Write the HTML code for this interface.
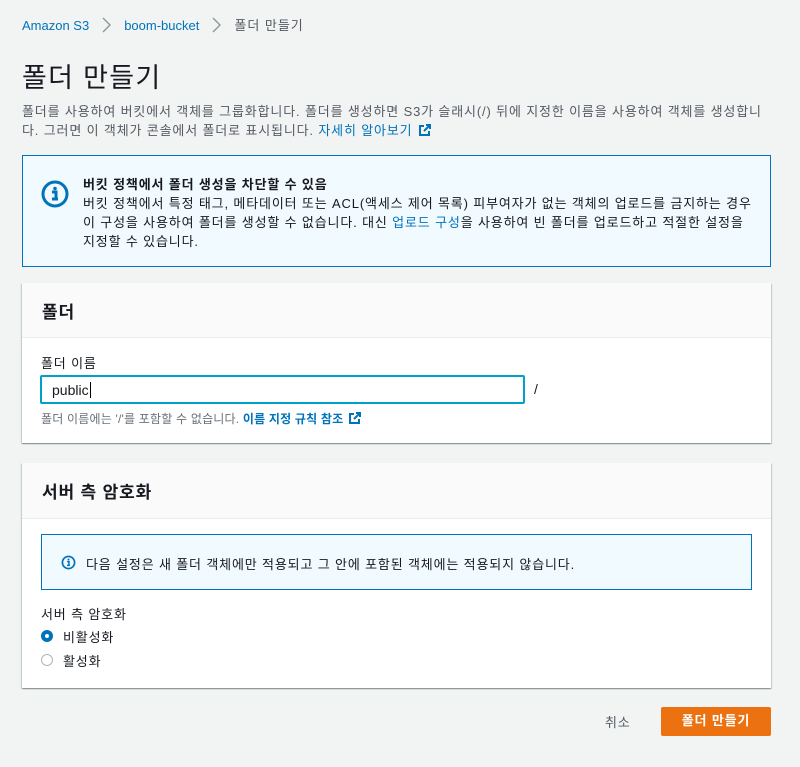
<!DOCTYPE html>
<html><head><meta charset="utf-8"><style>
*{box-sizing:border-box;margin:0;padding:0}
body{width:800px;height:767px;background:#f2f3f3;font-family:"Liberation Sans","Noto Sans CJK KR",sans-serif;color:#16191f;font-size:13px;position:relative;overflow:hidden;letter-spacing:0.85px}
.a{position:absolute}
a{color:#0073bb;text-decoration:none}
.card{position:absolute;left:22px;width:749px;background:#fff;box-shadow:0 1px 1px 0 rgba(0,28,36,.3),1px 1px 1px 0 rgba(0,28,36,.15),-1px 1px 1px 0 rgba(0,28,36,.15)}
.hd{background:#fafafa;border-bottom:1px solid #eaeded;padding:0 20px;font-weight:bold;font-size:17px;display:flex;align-items:center}
.ext{display:inline-block;vertical-align:-2px;margin-left:5px}
.chev{display:inline-block;vertical-align:-3px;margin:0 13px}
</style></head><body>
<div class="a" style="left:22px;top:15px;font-size:13px;color:#545b64;letter-spacing:0">
<a href="#">Amazon S3</a><svg class="chev" width="9" height="16" viewBox="0 0 9 16"><path d="M1 1l7 7-7 7" fill="none" stroke="#879596" stroke-width="1.3"/></svg><a href="#">boom-bucket</a><svg class="chev" width="9" height="16" viewBox="0 0 9 16"><path d="M1 1l7 7-7 7" fill="none" stroke="#879596" stroke-width="1.3"/></svg><span style="letter-spacing:1px">폴더 만들기</span></div>
<div class="a" style="left:22px;top:56px;font-size:27px;letter-spacing:1.3px">폴더 만들기</div>
<div class="a" style="left:22px;top:102px;width:752px;line-height:19px;color:#545b64">폴더를 사용하여 버킷에서 객체를 그룹화합니다. 폴더를 생성하면 S3가 슬래시(/) 뒤에 지정한 이름을 사용하여 객체를 생성합니다. 그러면 이 객체가 콘솔에서 폴더로 표시됩니다. <a href="#">자세히 알아보기<svg class="ext" width="13" height="13" viewBox="0 0 13 13"><path d="M6 2H2v9h9V7M8 1h4v4M12 1L6 7" fill="none" stroke="#0073bb" stroke-width="2"/></svg></a></div>
<div class="a" style="left:22px;top:155px;width:749px;height:112px;border:1px solid #0073bb;background:#f1faff">
<svg class="a" style="left:18px;top:24px" width="28" height="28" viewBox="0 0 28 28"><circle cx="14" cy="14" r="12" fill="none" stroke="#0073bb" stroke-width="3"/><circle cx="14" cy="8.5" r="1.8" fill="#0073bb"/><path d="M11 12h4v7h2M11 19h6" stroke="#0073bb" stroke-width="3" fill="none"/></svg>
<div class="a" style="left:60px;top:19px;width:670px;line-height:19px"><b>버킷 정책에서 폴더 생성을 차단할 수 있음</b><br>버킷 정책에서 특정 태그, 메타데이터 또는 ACL(액세스 제어 목록) 피부여자가 없는 객체의 업로드를 금지하는 경우 이 구성을 사용하여 폴더를 생성할 수 없습니다. 대신 <a href="#">업로드 구성</a>을 사용하여 빈 폴더를 업로드하고 적절한 설정을 지정할 수 있습니다.</div></div>
<div class="card" style="top:283px;height:160px">
<div class="hd" style="height:55px">폴더</div>
<div class="a" style="left:19px;top:70px">폴더 이름</div>
<div class="a" style="left:18px;top:92px;width:485px;height:29px;border:2px solid #00a1c9;border-radius:2px;padding:5px 10px;font-size:14px;letter-spacing:0">public<span style="border-left:1px solid #000;margin-left:1px"></span></div>
<div class="a" style="left:512px;top:98px;font-size:14px">/</div>
<div class="a" style="left:19px;top:127px;font-size:12px;color:#687078;letter-spacing:0.2px">폴더 이름에는 '/'를 포함할 수 없습니다. <a href="#" style="font-weight:bold">이름 지정 규칙 참조<svg class="ext" width="13" height="13" viewBox="0 0 13 13"><path d="M6 2H2v9h9V7M8 1h4v4M12 1L6 7" fill="none" stroke="#0073bb" stroke-width="2"/></svg></a></div>
</div>
<div class="card" style="top:463px;height:225px">
<div class="hd" style="height:56px">서버 측 암호화</div>
<div class="a" style="left:19px;top:71px;width:711px;height:56px;border:1px solid #0073bb;background:#f1faff">
<svg class="a" style="left:19px;top:20px" width="15" height="15" viewBox="0 0 16 16"><circle cx="8" cy="8" r="6.5" fill="none" stroke="#0073bb" stroke-width="1.8"/><circle cx="8" cy="4.8" r="1.1" fill="#0073bb"/><path d="M6.5 7h2v4M6.5 11h3" stroke="#0073bb" stroke-width="1.6" fill="none"/></svg>
<div class="a" style="left:44px;top:19px">다음 설정은 새 폴더 객체에만 적용되고 그 안에 포함된 객체에는 적용되지 않습니다.</div></div>
<div class="a" style="left:19px;top:141px">서버 측 암호화</div>
<div class="a" style="left:19px;top:167px;width:12px;height:12px;border-radius:50%;border:4px solid #0073bb"></div>
<div class="a" style="left:41px;top:164px">비활성화</div>
<div class="a" style="left:19px;top:191px;width:12px;height:12px;border-radius:50%;border:1px solid #aab7b8"></div>
<div class="a" style="left:41px;top:188px">활성화</div>
</div>
<div class="a" style="left:605px;top:712px;color:#545b64">취소</div>
<div class="a" style="left:661px;top:707px;width:110px;height:29px;background:#ec7211;border-radius:2px;color:#fff;font-weight:bold;text-align:center;line-height:28px">폴더 만들기</div>
</body></html>
